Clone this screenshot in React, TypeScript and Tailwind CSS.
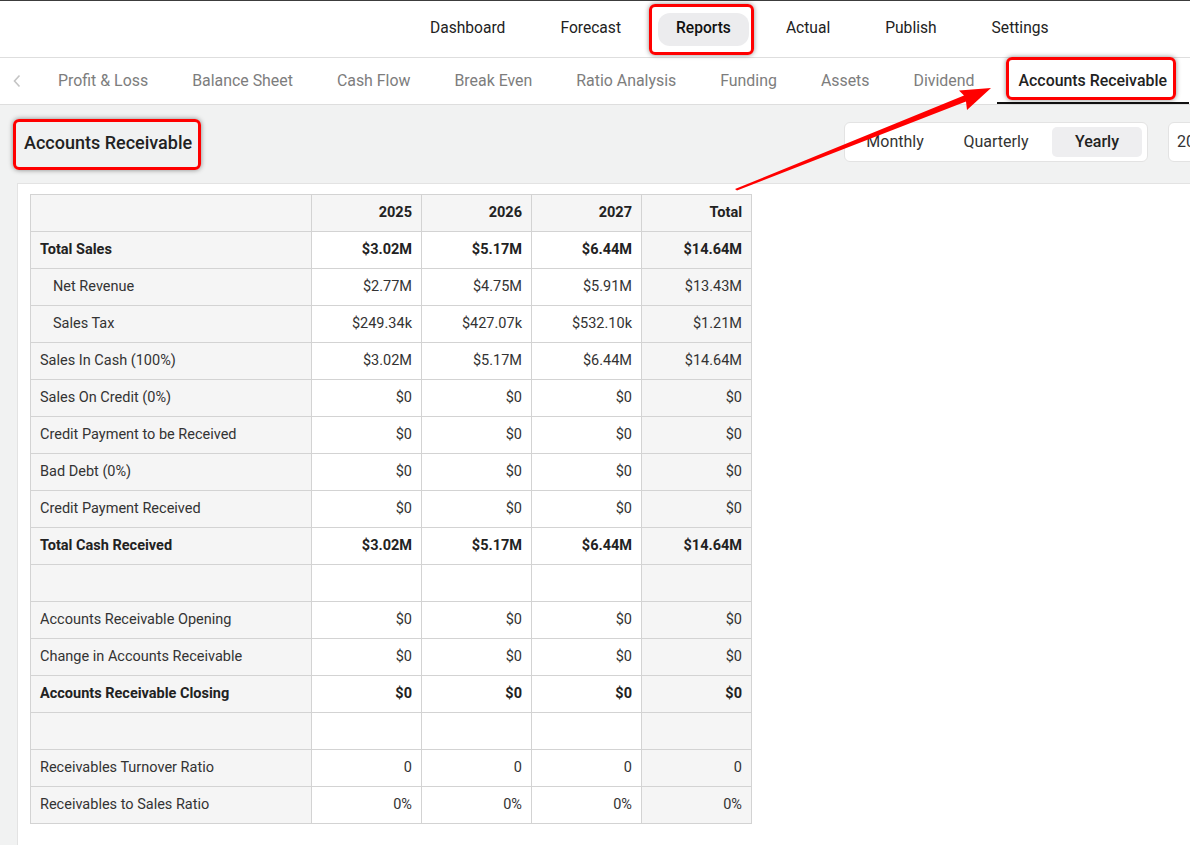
import React from 'react';

type Row = { label: string; values: string[]; bold?: boolean; indent?: boolean; empty?: boolean };

const rows: Row[] = [
  { label: 'Total Sales', values: ['$3.02M', '$5.17M', '$6.44M', '$14.64M'], bold: true },
  { label: 'Net Revenue', values: ['$2.77M', '$4.75M', '$5.91M', '$13.43M'], indent: true },
  { label: 'Sales Tax', values: ['$249.34k', '$427.07k', '$532.10k', '$1.21M'], indent: true },
  { label: 'Sales In Cash (100%)', values: ['$3.02M', '$5.17M', '$6.44M', '$14.64M'] },
  { label: 'Sales On Credit (0%)', values: ['$0', '$0', '$0', '$0'] },
  { label: 'Credit Payment to be Received', values: ['$0', '$0', '$0', '$0'] },
  { label: 'Bad Debt (0%)', values: ['$0', '$0', '$0', '$0'] },
  { label: 'Credit Payment Received', values: ['$0', '$0', '$0', '$0'] },
  { label: 'Total Cash Received', values: ['$3.02M', '$5.17M', '$6.44M', '$14.64M'], bold: true },
  { label: '', values: ['', '', '', ''], empty: true },
  { label: 'Accounts Receivable Opening', values: ['$0', '$0', '$0', '$0'] },
  { label: 'Change in Accounts Receivable', values: ['$0', '$0', '$0', '$0'] },
  { label: 'Accounts Receivable Closing', values: ['$0', '$0', '$0', '$0'], bold: true },
  { label: '', values: ['', '', '', ''], empty: true },
  { label: 'Receivables Turnover Ratio', values: ['0', '0', '0', '0'] },
  { label: 'Receivables to Sales Ratio', values: ['0%', '0%', '0%', '0%'] },
];

const topNav = ['Dashboard', 'Forecast', 'Reports', 'Actual', 'Publish', 'Settings'];
const subNav = ['Profit & Loss', 'Balance Sheet', 'Cash Flow', 'Break Even', 'Ratio Analysis', 'Funding', 'Assets', 'Dividend', 'Accounts Receivable'];

// red annotation frame drawn over an element
function Marker({ className }: { className: string }) {
  return (
    <div
      className={`pointer-events-none absolute rounded-[6px] border-[3px] border-[#ff0000] shadow-[0_0_5px_rgba(0,0,0,0.45)] ${className}`}
    />
  );
}

export default function App() {
  return (
    <div className="relative min-h-[845px] w-[1190px] overflow-hidden bg-[#f1f2f2] font-['Roboto','Liberation_Sans',sans-serif] text-[#222]">
      {/* Top Nav */}
      <header className="h-[58px] border-t border-b border-t-[#3c3c3c] border-b-[#dedede] bg-white">
        <nav className="flex h-full items-center gap-[19px] pl-[412px]">
          {topNav.map(item => (
            <div key={item} className="relative shrink-0">
              <span
                className={
                  item === 'Reports'
                    ? 'flex h-[33px] items-center whitespace-nowrap rounded-[12px] bg-[#ececee] px-[18px] text-[15.6px] font-medium text-[#111]'
                    : 'flex h-[33px] items-center whitespace-nowrap px-[18px] text-[15.6px] text-[#222]'
                }
              >
                {item}
              </span>
              {item === 'Reports' && <Marker className="-left-[9px] -right-[5px] -top-[9px] -bottom-[9px]" />}
            </div>
          ))}
        </nav>
      </header>

      {/* Sub Nav */}
      <div className="flex h-[47px] items-stretch border-b border-[#dedede] bg-white">
        <div className="flex w-[36px] shrink-0 items-center justify-center pr-[2px]">
          <svg width="10" height="14" viewBox="0 0 10 14" fill="none">
            <path d="M7.5 1.5L2.5 7l5 5.5" stroke="#c4c4c4" strokeWidth="1.6" />
          </svg>
        </div>
        {subNav.map(item => {
          const active = item === 'Accounts Receivable';
          return (
            <div
              key={item}
              className={
                active
                  ? 'relative flex shrink-0 items-center whitespace-nowrap border-b-2 border-[#111] px-[22px] pt-[2px] text-[15.9px] font-medium text-[#222]'
                  : 'flex shrink-0 items-center whitespace-nowrap px-[22px] text-[15.9px] text-[#7d7d7d]'
              }
            >
              {item}
              {active && <Marker className="left-[9px] right-[13px] -top-[1px] bottom-[2px]" />}
            </div>
          );
        })}
      </div>

      {/* Title Row */}
      <div className="flex h-[78px] items-center pb-[4px] pl-[24px]">
        <div className="w-[820px] shrink-0">
          <div className="relative inline-block">
            <h1 className="text-[18px] font-medium text-[#222]">Accounts Receivable</h1>
            <Marker className="-left-[11px] -right-[9px] -top-[10px] -bottom-[14px]" />
          </div>
        </div>
        <div className="flex shrink-0 items-center gap-[20px]">
          <div className="flex h-[40px] items-center gap-[11px] rounded-[6px] border border-[#e3e3e3] bg-white p-[5px]">
            <button className="h-[30px] w-[90px] rounded-[5px] text-[16px] text-[#333]">Monthly</button>
            <button className="h-[30px] w-[90px] rounded-[5px] text-[16px] text-[#333]">Quarterly</button>
            <button className="h-[30px] w-[90px] rounded-[5px] bg-[#eeeef0] text-[16px] font-medium text-[#222]">Yearly</button>
          </div>
          <div className="flex h-[40px] w-[100px] shrink-0 items-center rounded-[6px] border border-[#e3e3e3] bg-white pl-[8px] text-[16px] text-[#333]">
            2025
          </div>
        </div>
      </div>

      {/* Card */}
      <div className="ml-[17px] min-h-[662px] border-l border-t border-[#e3e3e3] bg-white pl-[12px] pt-[10px]">
        <table className="border-collapse text-[14.5px] text-[#333]">
          <thead>
            <tr>
              <th className="h-[37px] w-[281px] border border-[#d3d3d3] bg-[#f5f5f5]" />
              {['2025', '2026', '2027', 'Total'].map(h => (
                <th key={h} className="h-[37px] w-[110px] border border-[#d3d3d3] bg-[#f5f5f5] pr-[9px] text-right font-bold text-[#222]">
                  {h}
                </th>
              ))}
            </tr>
          </thead>
          <tbody>
            {rows.map((r, i) => (
              <tr key={i}>
                <td
                  className={`h-[37px] whitespace-nowrap border border-[#d3d3d3] bg-[#f5f5f5] ${r.indent ? 'pl-[22px]' : 'pl-[9px]'} ${r.bold ? 'font-bold text-[#222]' : ''}`}
                >
                  {r.label}
                </td>
                {r.values.map((v, j) => (
                  <td
                    key={j}
                    className={`h-[37px] border border-[#d3d3d3] pr-[9px] text-right ${j === 3 ? 'bg-[#f5f5f5]' : 'bg-white'} ${r.bold ? 'font-bold text-[#222]' : ''}`}
                  >
                    {v}
                  </td>
                ))}
              </tr>
            ))}
          </tbody>
        </table>
      </div>

      {/* Annotation arrow */}
      <svg className="pointer-events-none absolute left-0 top-0" width="1190" height="845" viewBox="0 0 1190 845">
        <polygon
          points="735,189 964,95.5 959,90.5 991,88 967,110 966,101.5 737,190.5"
          fill="#ff0000"
        />
      </svg>
    </div>
  );
}
